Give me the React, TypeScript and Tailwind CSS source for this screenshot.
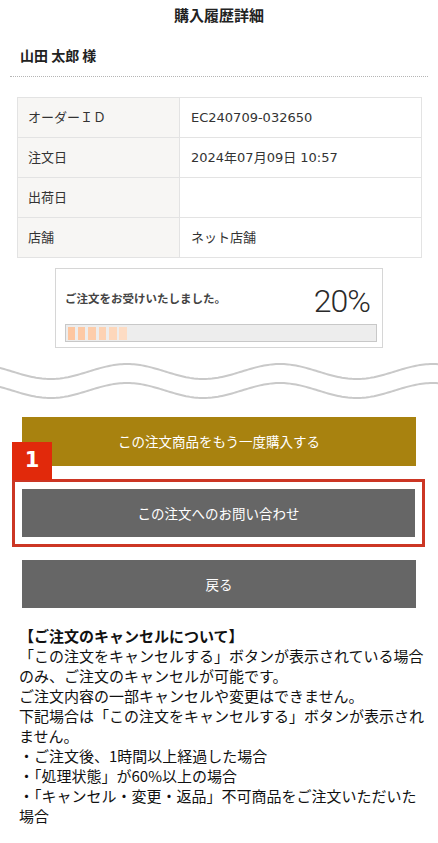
import React from "react";

const wavePath = (cy: number) => {
  const pts: string[] = [];
  for (let x = -2; x <= 440; x += 2) {
    const y = cy - 7.5 * Math.cos((2 * Math.PI * (x - 127)) / 153);
    pts.push(`${x},${y.toFixed(2)}`);
  }
  return "M" + pts.join(" L");
};

const segColors = ["#fdc6a0", "#fdc9a5", "#fdcdab", "#fdd2b3", "#fdd7bb", "#fddcc4"];

export default function App() {
  const font = { fontFamily: '"DejaVu Sans", "Noto Sans CJK JP", sans-serif' };
  return (
    <div className="w-[438px] min-h-[843px] bg-white text-[#222]" style={font}>
      <h1 className="h-[30px] flex items-center justify-center text-[15px] font-bold text-[#222] [font-family:'Noto_Sans_CJK_JP',sans-serif]">
        購入履歴詳細
      </h1>
      <div className="mx-[10px] border-b border-dotted border-[#b5b5b5] pt-[15px] pb-[11px] pl-[10px] text-[14px] leading-[20px] font-bold [font-family:'Noto_Sans_CJK_JP',sans-serif]">
        山田 太郎 様
      </div>

      <table className="mt-[20px] ml-[17px] w-[405px] border-collapse text-[13px] text-[#333]">
        <tbody>
          {[
            ["オーダーＩＤ", "EC240709-032650"],
            ["注文日", "2024年07月09日 10:57"],
            ["出荷日", ""],
            ["店舗", "ネット店舗"],
          ].map(([k, v]) => (
            <tr key={k} className="h-[40px]">
              <td className="w-[162px] border border-[#e3e3e3] bg-[#f7f6f4] pl-[10px]">{k}</td>
              <td className="border border-[#e3e3e3] pl-[11px]">{v}</td>
            </tr>
          ))}
        </tbody>
      </table>

      <div className="mt-[10px] ml-[55px] w-[328px] border border-[#d6d6d6] pl-[9px] pr-[5px] pt-[16px] pb-[5px]">
        <div className="flex items-center justify-between pr-[7px] h-[32px]">
          <span className="text-[11.5px] font-bold text-[#444] mb-[4px] [font-family:'Noto_Sans_CJK_JP',sans-serif]">
            ご注文をお受けいたしました。
          </span>
          <span className="text-[32px] leading-[32px] font-light tracking-[-1px] text-[#2a2a2a] [font-family:Roboto,sans-serif]">
            20%
          </span>
        </div>
        <div className="mt-[7px] h-[18px] border border-[#c8c8c8] bg-[#ededed] flex items-center gap-[2.9px] pl-[1.5px]">
          {segColors.map((c, i) => (
            <div key={i} className="h-[13px] w-[7.5px]" style={{ backgroundColor: c }} />
          ))}
        </div>
      </div>

      <svg className="mt-[7px] block" width="438" height="50" viewBox="0 355 438 50">
        <path d={wavePath(371.5)} fill="none" stroke="#c9c9c9" strokeWidth="2" />
        <path d={wavePath(390.5)} fill="none" stroke="#c9c9c9" strokeWidth="2" />
      </svg>

      <div className="mt-[12px] mx-[22px] h-[49px] bg-[#a8820f] flex items-center justify-center text-white text-[13.5px] [font-family:'Noto_Sans_CJK_JP',sans-serif]">
        この注文商品をもう一度購入する
      </div>

      <div className="relative mt-[13px] ml-[12px] mr-[13px] border-[3px] border-[#cc3624] p-[7px]">
        <div className="absolute left-[-3px] top-[-40px] w-[40px] h-[38px] bg-[#e1290b] flex items-center justify-center text-white text-[21px] font-bold [font-family:'DejaVu_Sans',sans-serif]">
          1
        </div>
        <div className="h-[48px] bg-[#666666] flex items-center justify-center text-white text-[13.5px] [font-family:'Noto_Sans_CJK_JP',sans-serif]">
          この注文へのお問い合わせ
        </div>
      </div>

      <div className="mt-[13px] mx-[22px] h-[48px] bg-[#666666] flex items-center justify-center text-white text-[13.5px] [font-family:'Noto_Sans_CJK_JP',sans-serif]">
        戻る
      </div>

      <div className="mt-[18px] pl-[19px] pr-[4px] text-[15px] leading-[20px] text-[#111] whitespace-nowrap [font-family:'Noto_Sans_CJK_JP',sans-serif]">
        <div className="font-bold">【ご注文のキャンセルについて】</div>
        <div>「この注文をキャンセルする」ボタンが表示されている場合</div>
        <div>のみ、ご注文のキャンセルが可能です。</div>
        <div>ご注文内容の一部キャンセルや変更はできません。</div>
        <div>下記場合は「この注文をキャンセルする」ボタンが表示され</div>
        <div>ません。</div>
        <div>・ご注文後、1時間以上経過した場合</div>
        <div>・「処理状態」が60%以上の場合</div>
        <div>・「キャンセル・変更・返品」不可商品をご注文いただいた</div>
        <div>場合</div>
      </div>
    </div>
  );
}
